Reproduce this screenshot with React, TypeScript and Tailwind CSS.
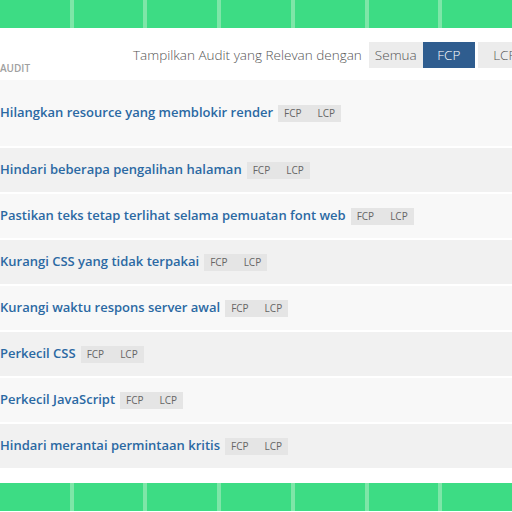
const audits = [
  "Hilangkan resource yang memblokir render",
  "Hindari beberapa pengalihan halaman",
  "Pastikan teks tetap terlihat selama pemuatan font web",
  "Kurangi CSS yang tidak terpakai",
  "Kurangi waktu respons server awal",
  "Perkecil CSS",
  "Perkecil JavaScript",
  "Hindari merantai permintaan kritis",
];

function GreenBar() {
  return (
    <div className="flex h-[28px] gap-[4px] bg-[#7ee6a8]">
      {[0, 1, 2, 3, 4, 5, 6].map((n) => (
        <div key={n} className="flex-1 bg-[#3ddc84]" />
      ))}
    </div>
  );
}

function Badge() {
  return (
    <span className="inline-flex h-[17px] items-center gap-[16px] bg-[#e5e5e5] px-[6px] text-[10px] text-[#666]">
      <span>FCP</span>
      <span>LCP</span>
    </span>
  );
}

export default function App() {
  return (
    <div className="h-[512px] w-[512px] overflow-hidden bg-white font-['Open_Sans',sans-serif]">
      <GreenBar />

      <div className="relative h-[52px]">
        <span className="absolute left-0 top-[33px] text-[10px] font-semibold uppercase text-[#a0a0a0]">
          Audit
        </span>
        <div className="flex h-full items-center pl-[133px] pt-[2px]">
          <span className="mr-[7px] whitespace-nowrap text-[13.5px] font-light text-[#555]">
            Tampilkan Audit yang Relevan dengan
          </span>
          <span className="flex h-[26px] w-[54px] shrink-0 items-center justify-center bg-[#ececec] text-[13.5px] font-light text-[#555]">
            Semua
          </span>
          <span className="flex h-[26px] w-[52px] shrink-0 items-center justify-center bg-[#2f5d8f] text-[13.5px] font-light text-white">
            FCP
          </span>
          <span className="ml-[3px] flex h-[26px] w-[54px] shrink-0 items-center justify-center bg-[#ececec] text-[13.5px] font-light text-[#555]">
            LCP
          </span>
        </div>
      </div>

      <div className="flex flex-col gap-[2px]">
        {audits.map((title, i) => (
          <div
            key={title}
            className={`flex items-center gap-[5px] whitespace-nowrap ${
              i === 0 ? "h-[66px]" : "h-[44px]"
            } ${i % 2 === 0 ? "bg-[#f8f8f8]" : "bg-[#f1f1f1]"}`}
          >
            <span className="text-[13px] font-semibold text-[#2b69a3]">{title}</span>
            <Badge />
          </div>
        ))}
      </div>

      <div className="h-[15px]" />
      <GreenBar />
    </div>
  );
}
